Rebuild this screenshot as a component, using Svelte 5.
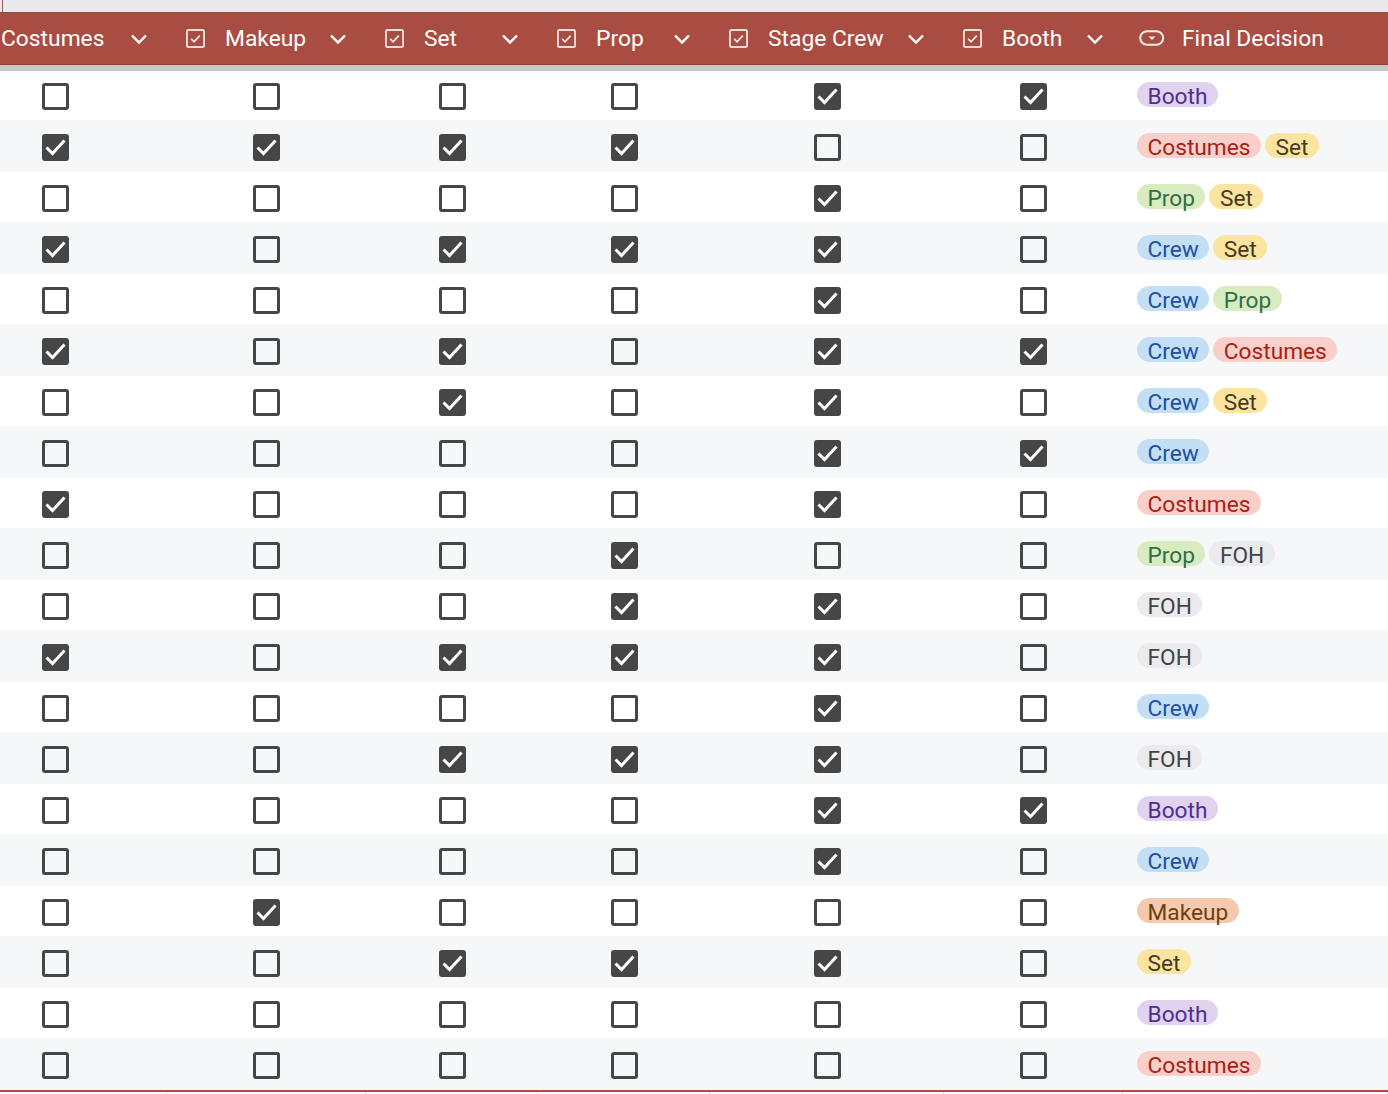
<script>
  const columns = [
    { name: 'Costumes', width: 224, icon: 'check' },
    { name: 'Makeup', width: 199, icon: 'check' },
    { name: 'Set', width: 172, icon: 'check' },
    { name: 'Prop', width: 172, icon: 'check' },
    { name: 'Stage Crew', width: 234, icon: 'check' },
    { name: 'Booth', width: 179, icon: 'check' },
    { name: 'Final Decision', width: 265, icon: 'select' }
  ];

  // checkbox states per row + the final decision tags
  const rows = [
    ['000011', ['Booth']],
    ['111100', ['Costumes', 'Set']],
    ['000010', ['Prop', 'Set']],
    ['101110', ['Crew', 'Set']],
    ['000010', ['Crew', 'Prop']],
    ['101011', ['Crew', 'Costumes']],
    ['001010', ['Crew', 'Set']],
    ['000011', ['Crew']],
    ['100010', ['Costumes']],
    ['000100', ['Prop', 'FOH']],
    ['000110', ['FOH']],
    ['101110', ['FOH']],
    ['000010', ['Crew']],
    ['001110', ['FOH']],
    ['000011', ['Booth']],
    ['000010', ['Crew']],
    ['010000', ['Makeup']],
    ['001110', ['Set']],
    ['000000', ['Booth']],
    ['000000', ['Costumes']]
  ];

  const template = columns.map((c) => c.width + 'px').join(' ');
</script>

<div class="page">
  <div class="topbar"><div class="tick"></div></div>
  <div class="sheet" style="--cols: {template}">
    <div class="head">
      {#each columns as col, i}
        <div class="th">
          {#if col.icon === 'check'}
            <svg class="type" viewBox="0 0 20 20" width="19" height="19">
              <rect x="1" y="1" width="18" height="18" rx="1.5" fill="none" stroke="#f0dcd9" stroke-width="2" />
              <path d="M5.5 10.5l3 3 6-6.5" fill="none" stroke="#f8ecea" stroke-width="1.8" />
            </svg>
          {:else}
            <svg class="select" viewBox="0 0 26 16" width="26" height="16">
              <rect x="1.2" y="1.2" width="23" height="13.6" rx="6.8" fill="none" stroke="#f8ecea" stroke-width="2" />
              <path d="M9.5 6.5h7l-3.5 3.5z" fill="#f8ecea" />
            </svg>
          {/if}
          <span class="label" class:wide={col.icon === 'select'}>{col.name}</span>
          {#if i < 6}
            <svg class="chev" viewBox="0 0 18 12" width="18" height="12">
              <path d="M2 2.5l7 7 7-7" fill="none" stroke="#fff" stroke-width="2.4" />
            </svg>
          {/if}
        </div>
      {/each}
    </div>
    <div class="shadow"></div>
    {#each rows as row, r}
      <div class="row" class:alt={r % 2 === 1} class:first={r === 0}>
        {#each row[0].split('') as v}
          <div class="td">
            <span class="box" class:on={v === '1'}>
              {#if v === '1'}
                <svg viewBox="0 0 27 27" width="27" height="27">
                  <path d="M4.5 13.5l6 6 12-13" fill="none" stroke="#fff" stroke-width="3" />
                </svg>
              {/if}
            </span>
          </div>
        {/each}
        <div class="tags">
          {#each row[1] as tag}
            <span class="tag {tag.toLowerCase()}">{tag}</span>
          {/each}
        </div>
      </div>
    {/each}
    <div class="foot">
      {#each columns as col}
        <div class="fc"></div>
      {/each}
    </div>
  </div>
</div>

<style>
  :global(body) {
    margin: 0;
    background: #fff;
  }
  .page {
    width: 1388px;
    height: 1094px;
    overflow: hidden;
    font-family: Roboto, "Liberation Sans", sans-serif;
  }
  .topbar {
    height: 12px;
    background: #e8e9eb;
  }
  .tick {
    width: 2px;
    height: 12px;
    border-right: 1px solid #a05a50;
  }
  .sheet {
    margin-left: -57px;
    width: 1445px;
  }
  .head {
    display: grid;
    grid-template-columns: var(--cols);
    height: 51px;
    background: #a94d42;
    border-top: 1px solid #8a4a42;
    border-bottom: 1px solid #8c3f36;
    align-items: center;
    color: #fff;
    font-size: 22.8px;
  }
  .th {
    position: relative;
    display: flex;
    align-items: center;
    padding-left: 19px;
    height: 100%;
  }
  .type {
    flex: none;
    margin-top: -1px;
  }
  .select {
    flex: none;
    margin-left: -3px;
    margin-top: -1px;
  }
  .label {
    margin-left: 20px;
    white-space: nowrap;
  }
  .label.wide {
    margin-left: 17px;
  }
  .chev {
    position: absolute;
    right: 19px;
    top: 20px;
  }
  .shadow {
    height: 6px;
    background: #c5c6c8;
  }
  .row {
    display: grid;
    grid-template-columns: var(--cols);
    box-sizing: border-box;
    height: 50px;
    padding-top: 2px;
    align-items: center;
    background: #fff;
  }
  .row.first {
    height: 49px;
  }
  .row.alt {
    height: 52px;
    background: #f6f7f9;
  }
  .td {
    display: flex;
    justify-content: center;
  }
  .box {
    display: block;
    box-sizing: border-box;
    width: 27px;
    height: 27px;
    border: 3px solid #464646;
    border-radius: 3px;
    position: relative;
  }
  .box.on {
    background: #464646;
  }
  .box svg {
    position: absolute;
    left: -3px;
    top: -3px;
  }
  .tags {
    display: flex;
    gap: 4px;
    padding-left: 14px;
    padding-bottom: 4px;
  }
  .tag {
    height: 25px;
    line-height: 30px;
    padding: 0 10.5px;
    border-radius: 13px;
    font-size: 22.7px;
    white-space: nowrap;
  }
  .booth { background: #e1d3f0; color: #4f2f8e; }
  .costumes { background: #f8cfc9; color: #a81f17; }
  .set { background: #fbe3a0; color: #46391f; }
  .prop { background: #d8ecc0; color: #2f6e48; }
  .crew { background: #c3dff5; color: #2050a4; }
  .foh { background: #ebebed; color: #444; }
  .makeup { background: #f5c9ad; color: #6f3f12; }
  .foot {
    display: grid;
    grid-template-columns: var(--cols);
    height: 3px;
    border-top: 2px solid #a94d42;
  }
  .fc {
    border-right: 1px solid #ddd;
  }
</style>
